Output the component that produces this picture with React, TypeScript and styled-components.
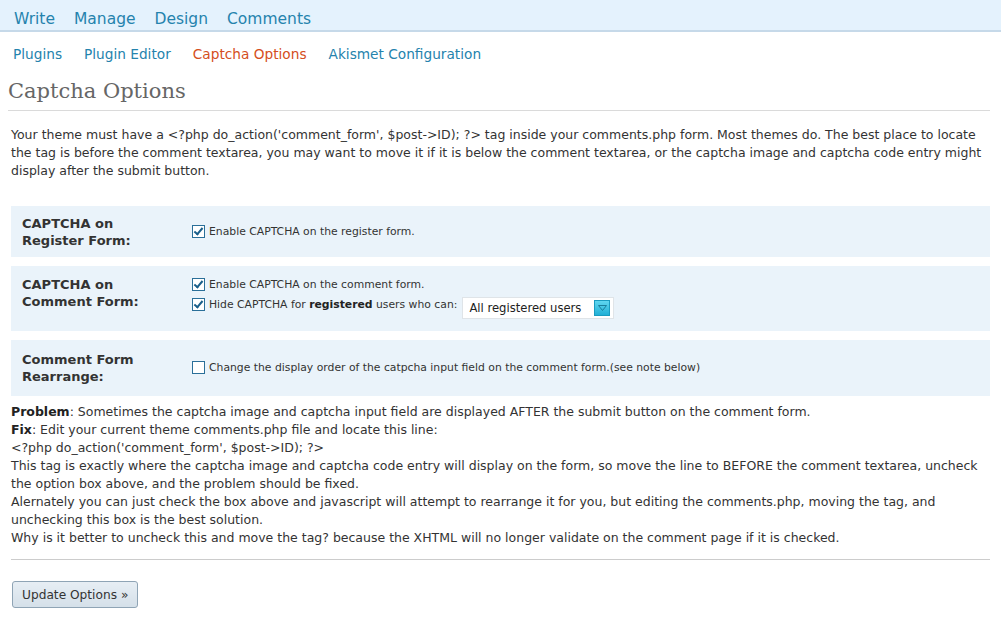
import React from 'react'
import styled, { createGlobalStyle } from 'styled-components'

const blue = '#2583ad'
const orange = '#d54e21'
const rowBg = '#eaf3fa'

const GlobalStyle = createGlobalStyle`
  html, body {
    margin: 0;
    padding: 0;
    background: #fff;
  }
  body {
    font-family: "DejaVu Sans", Verdana, sans-serif;
    color: #333;
  }
`

const topMenu = ['Write', 'Manage', 'Design', 'Comments']
const subMenu = ['Plugins', 'Plugin Editor', 'Captcha Options', 'Akismet Configuration']

export default function App() {
  return (
    <Page>
      <GlobalStyle />
      <TopBar>
        {topMenu.map(item => <TopLink key={item}>{item}</TopLink>)}
      </TopBar>

      <SubBar>
        {subMenu.map(item => (
          <SubLink key={item} $current={item == 'Captcha Options'}>{item}</SubLink>
        ))}
      </SubBar>

      <Wrap>
        <Title>Captcha Options</Title>

        <Intro>
          Your theme must have a &lt;?php do_action('comment_form', $post-&gt;ID); ?&gt; tag inside your comments.php form.
          Most themes do. The best place to locate the tag is before the comment textarea, you may want to move it
          if it is below the comment textarea, or the captcha image and captcha code entry might display after the submit button.
        </Intro>

        <OptionTable>
          <OptionRow $height={51}>
            <RowLabel>CAPTCHA on<br />Register Form:</RowLabel>
            <RowField>
              <CheckLine>
                <Check $checked />
                <CheckText>Enable CAPTCHA on the register form.</CheckText>
              </CheckLine>
            </RowField>
          </OptionRow>

          <OptionRow $height={65} $top>
            <RowLabel>CAPTCHA on<br />Comment Form:</RowLabel>
            <RowField>
              <CheckLine>
                <Check $checked />
                <CheckText>Enable CAPTCHA on the comment form.</CheckText>
              </CheckLine>
              <CheckLine>
                <Check $checked />
                <CheckText>Hide CAPTCHA for <b>registered</b> users who can:</CheckText>
                <Select>
                  All registered users
                  <SelectArrow>
                    <svg width="9" height="6" viewBox="0 0 9 6">
                      <path d="M0.5 0.5 H8.5 L4.5 5.5 Z" fill="none" stroke="#1a7f9c" strokeWidth="1" />
                    </svg>
                  </SelectArrow>
                </Select>
              </CheckLine>
            </RowField>
          </OptionRow>

          <OptionRow $height={56}>
            <RowLabel>Comment Form<br />Rearrange:</RowLabel>
            <RowField>
              <CheckLine>
                <Check />
                <CheckText>Change the display order of the catpcha input field on the comment form.(see note below)</CheckText>
              </CheckLine>
            </RowField>
          </OptionRow>
        </OptionTable>

        <Notes>
          <b>Problem</b>: Sometimes the captcha image and captcha input field are displayed AFTER the submit button on the comment form.<br />
          <b>Fix</b>: Edit your current theme comments.php file and locate this line:<br />
          &lt;?php do_action('comment_form', $post-&gt;ID); ?&gt;<br />
          This tag is exactly where the captcha image and captcha code entry will display on the form, so move the line to BEFORE
          the comment textarea, uncheck the option box above, and the problem should be fixed.<br />
          Alernately you can just check the box above and javascript will attempt to rearrange it for you, but editing the
          comments.php, moving the tag, and unchecking this box is the best solution.<br />
          Why is it better to uncheck this and move the tag? because the XHTML will no longer validate on the comment page if it is checked.
        </Notes>

        <Rule />

        <Submit>Update Options »</Submit>
      </Wrap>
    </Page>
  )
}

const Page = styled.div`
  width: 1001px;
  height: 620px;
  overflow: hidden;
`

const TopBar = styled.div`
  display: flex;
  gap: 19px;
  height: 32px;
  padding-left: 14px;
  align-items: center;
  background: #e4f2fd;
  border-bottom: 2px solid #c6d9e9;
  box-sizing: border-box;
`

const TopLink = styled.a`
  font-size: 15.5px;
  color: ${blue};
  padding-top: 7px;
`

const SubBar = styled.div`
  display: flex;
  gap: 22px;
  height: 43px;
  padding-left: 13px;
  align-items: center;
`

const SubLink = styled.a<{ $current?: boolean }>`
  font-size: 13.7px;
  color: ${p => p.$current ? orange : blue};
`

const Wrap = styled.div`
  padding: 0 11px 0 11px;
`

const Title = styled.h2`
  margin: 0 0 0 -3px;
  padding: 2px 0 5px 0;
  font-family: "DejaVu Serif", Georgia, serif;
  font-weight: normal;
  font-size: 21px;
  line-height: 28px;
  color: #666;
  border-bottom: 1px solid #dadada;
`

const Intro = styled.p`
  margin: 15px 0 0 0;
  font-size: 12.5px;
  line-height: 18px;
`

const OptionTable = styled.div`
  display: flex;
  flex-direction: column;
  gap: 9px;
  margin-top: 26px;
`

const OptionRow = styled.div<{ $height: number; $top?: boolean }>`
  display: grid;
  grid-template-columns: 170px 1fr;
  align-items: ${p => p.$top ? 'start' : 'center'};
  min-height: ${p => p.$height}px;
  padding: ${p => p.$top ? '10px 0 0 11px' : '0 0 0 11px'};
  background: ${rowBg};
  box-sizing: border-box;
`

const RowLabel = styled.div`
  font-size: 13px;
  font-weight: bold;
  line-height: 17px;
  color: #333;
`

const RowField = styled.div`
  display: flex;
  flex-direction: column;
  gap: 2px;
`

const CheckLine = styled.label`
  display: flex;
  align-items: flex-start;
  font-size: 10.8px;
  color: #333;
  gap: 4px;

  b { color: #222; }
`

const CheckText = styled.span`
  line-height: 18px;
`

const Check = styled.span<{ $checked?: boolean }>`
  flex: none;
  width: 11px;
  height: 11px;
  margin-top: 2px;
  border: 1px solid #2a6f99;
  background: #fff;
  position: relative;

  &::after {
    content: '';
    display: ${p => p.$checked ? 'block' : 'none'};
    position: absolute;
    left: 3px;
    top: 0px;
    width: 3px;
    height: 7px;
    border: solid #1a5f8a;
    border-width: 0 2px 2px 0;
    transform: rotate(40deg);
  }
`

const Select = styled.span`
  display: inline-flex;
  align-items: center;
  justify-content: space-between;
  width: 152px;
  height: 22px;
  box-sizing: border-box;
  margin: 1px 0 0 1px;
  padding: 0 3px 0 6px;
  border: 1px solid #dfe4e8;
  background: #fff;
  font-size: 11.6px;
  color: #222;
`

const SelectArrow = styled.span`
  display: flex;
  align-items: center;
  justify-content: center;
  width: 14px;
  height: 14px;
  background: linear-gradient(#5fd6ef, #22b0d6);
  border: 1px solid #1a9cc0;
`

const Notes = styled.div`
  margin-top: 7px;
  font-size: 12.5px;
  line-height: 18px;
  color: #333;

  b { color: #222; }
`

const Rule = styled.hr`
  margin: 12px 0 0 0;
  border: 0;
  border-top: 1px solid #ccc;
`

const Submit = styled.button`
  margin: 21px 0 0 1px;
  padding: 0 9px;
  height: 27px;
  font-family: "DejaVu Sans", Verdana, sans-serif;
  font-size: 12.2px;
  color: #333;
  background: linear-gradient(#e7eef4, #d5e0e9);
  border: 1px solid #8fa4b5;
  border-radius: 3px;
`
